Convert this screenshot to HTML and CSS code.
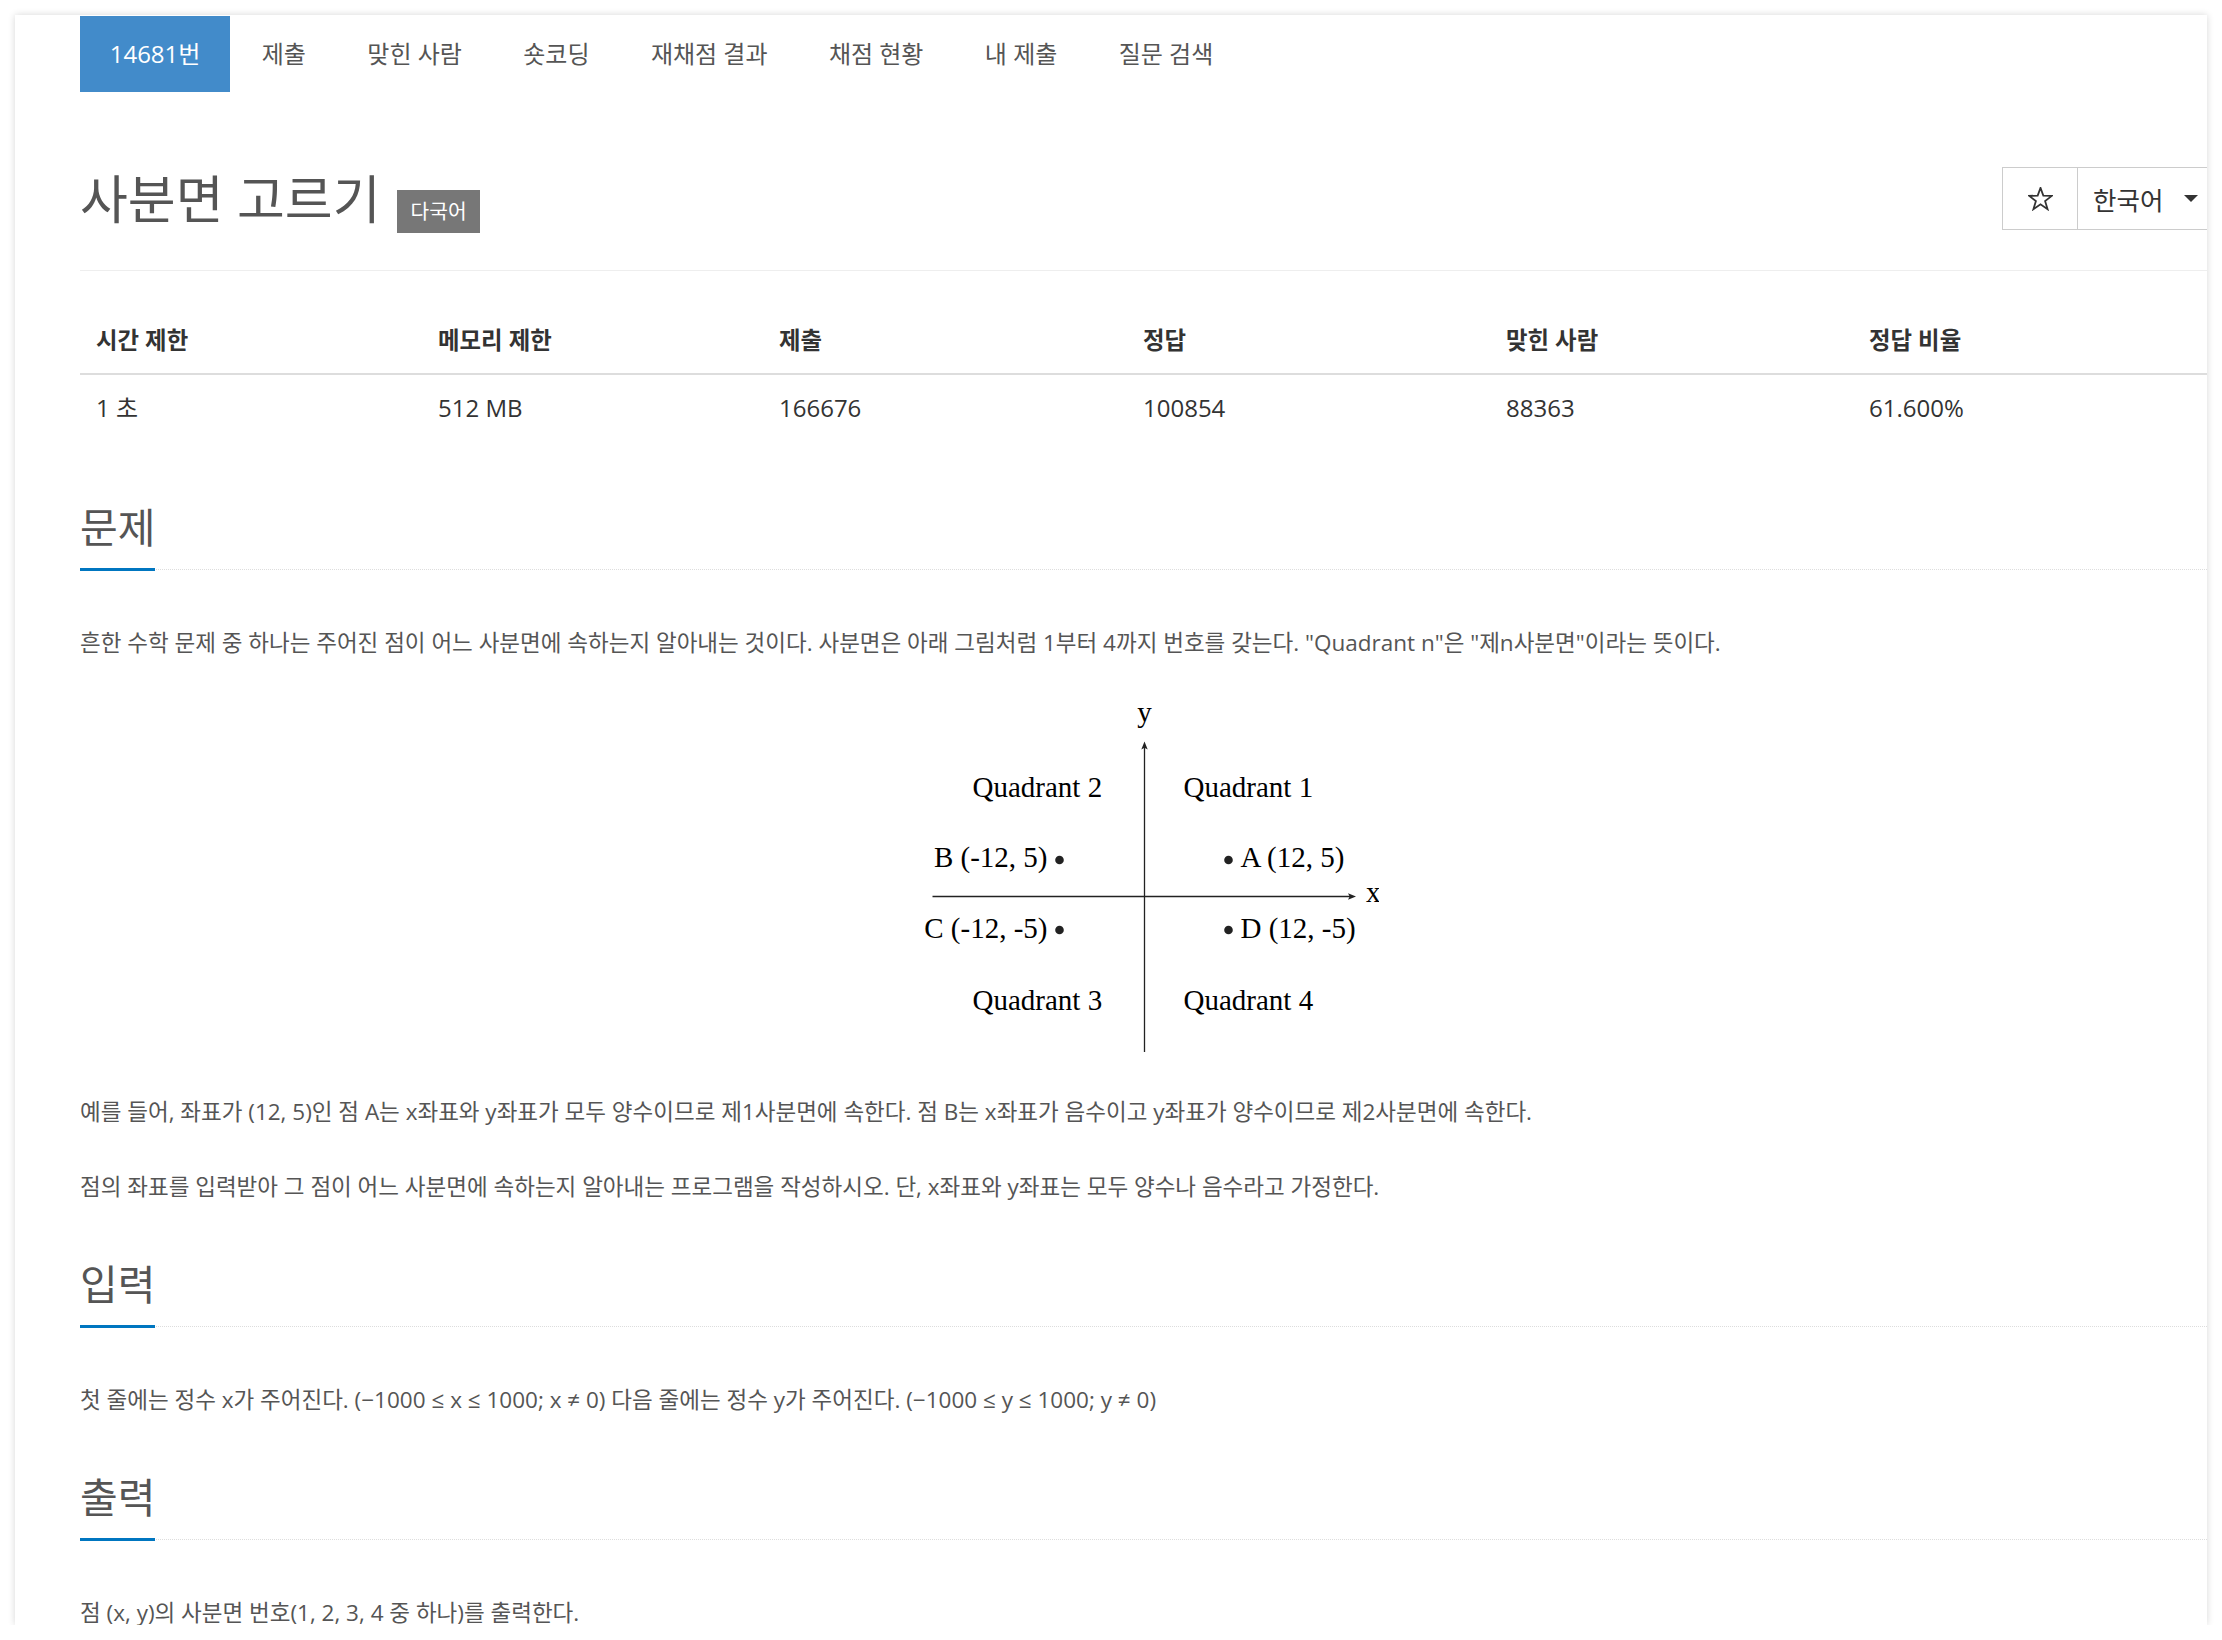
FILE: index.html
```html
<!DOCTYPE html>
<html lang="ko">
<head>
<meta charset="utf-8">
<title>사분면 고르기</title>
<link rel="stylesheet" href="styles.css">
</head>
<body>
<div class="card">
  <ul class="tabs">
    <li><a class="active">14681번</a></li>
    <li><a>제출</a></li>
    <li><a>맞힌 사람</a></li>
    <li><a>숏코딩</a></li>
    <li><a>재채점 결과</a></li>
    <li><a>채점 현황</a></li>
    <li><a>내 제출</a></li>
    <li><a>질문 검색</a></li>
  </ul>

  <div class="page-header">
    <h1 class="title"><span class="title-text">사분면 고르기</span><span class="label">다국어</span></h1>
    <div class="btn-group">
      <span class="btn star-btn">
        <svg width="25" height="24" viewBox="0 0 24 23"><polygon points="12,0.8 14.7,8.3 22.9,8.5 16.4,13.4 18.8,21.3 12,16.6 5.2,21.3 7.6,13.4 1.1,8.5 9.3,8.3" fill="none" stroke="#333" stroke-width="1.7" stroke-linejoin="miter"/></svg>
      </span>
      <span class="btn lang-btn">한국어<span class="caret"></span></span>
    </div>
  </div>

  <table class="info">
    <colgroup>
      <col class="c1"><col class="c2"><col class="c3"><col class="c4"><col class="c5"><col>
    </colgroup>
    <thead>
      <tr><th>시간 제한</th><th>메모리 제한</th><th>제출</th><th>정답</th><th>맞힌 사람</th><th>정답 비율</th></tr>
    </thead>
    <tbody>
      <tr><td>1 초</td><td>512 MB</td><td>166676</td><td>100854</td><td>88363</td><td>61.600%</td></tr>
    </tbody>
  </table>

  <section class="section">
    <div class="headline"><h2>문제</h2></div>
    <p class="text">흔한 수학 문제 중 하나는 주어진 점이 어느 사분면에 속하는지 알아내는 것이다. 사분면은 아래 그림처럼 1부터 4까지 번호를 갖는다. "Quadrant n"은 "제n사분면"이라는 뜻이다.</p>
    <div class="figure">
      <svg class="quad" width="470" height="360" viewBox="0 0 470 360">
        <g stroke="#222" stroke-width="1.3" fill="none">
          <line x1="235.5" y1="52" x2="235.5" y2="359"/>
          <line x1="23.5" y1="203.5" x2="443" y2="203.5"/>
        </g>
        <g fill="#222">
          <path d="M235.5 48.5 L232.3 56.5 L235.5 54.8 L238.7 56.5 Z"/>
          <path d="M447 203.5 L439 200.3 L440.7 203.5 L439 206.7 Z"/>
          <circle cx="150.5" cy="167" r="4.3"/>
          <circle cx="319.5" cy="167" r="4.3"/>
          <circle cx="150.5" cy="237" r="4.3"/>
          <circle cx="319.5" cy="237" r="4.3"/>
        </g>
        <g class="fig-text" fill="#000">
          <text x="235.5" y="29" text-anchor="middle">y</text>
          <text x="457" y="209">x</text>
          <text x="63.5" y="104">Quadrant 2</text>
          <text x="274.5" y="104">Quadrant 1</text>
          <text x="138.5" y="174" text-anchor="end">B (-12, 5)</text>
          <text x="331.5" y="174">A (12, 5)</text>
          <text x="138.5" y="245" text-anchor="end">C (-12, -5)</text>
          <text x="331.5" y="245">D (12, -5)</text>
          <text x="63.5" y="317">Quadrant 3</text>
          <text x="274.5" y="317">Quadrant 4</text>
        </g>
      </svg>
    </div>
    <p class="text">예를 들어, 좌표가 (12, 5)인 점 A는 x좌표와 y좌표가 모두 양수이므로 제1사분면에 속한다. 점 B는 x좌표가 음수이고 y좌표가 양수이므로 제2사분면에 속한다.</p>
    <p class="text">점의 좌표를 입력받아 그 점이 어느 사분면에 속하는지 알아내는 프로그램을 작성하시오. 단, x좌표와 y좌표는 모두 양수나 음수라고 가정한다.</p>
  </section>

  <section class="section">
    <div class="headline"><h2>입력</h2></div>
    <p class="text">첫 줄에는 정수 x가 주어진다. (−1000 ≤ x ≤ 1000; x ≠ 0) 다음 줄에는 정수 y가 주어진다. (−1000 ≤ y ≤ 1000; y ≠ 0)</p>
  </section>

  <section class="section">
    <div class="headline"><h2>출력</h2></div>
    <p class="text">점 (x, y)의 사분면 번호(1, 2, 3, 4 중 하나)를 출력한다.</p>
  </section>
</div>
</body>
</html>
```

FILE: styles.css
```css
html, body {
  margin: 0;
  padding: 0;
  background: #fff;
}

body {
  font-family: "Open Sans", "Noto Sans CJK KR", sans-serif;
  color: #555;
}

.card {
  box-sizing: border-box;
  width: 2192px;
  height: 1610px;
  margin: 15px 0 0 15px;
  padding: 1px 0 0 65px;
  background: #fff;
  overflow: hidden;
  box-shadow: 0 0 7px rgba(0, 0, 0, 0.16);
}

/* tabs */
.tabs {
  display: flex;
  list-style: none;
  margin: 0;
  padding: 0;
}

.tabs li + li {
  margin-left: 2px;
}

.tabs a {
  display: block;
  height: 76px;
  line-height: 76px;
  padding: 0 29.7px;
  font-size: 24px;
  color: #555;
}

.tabs a.active {
  background: #428bca;
  color: #fff;
}

/* header */
.page-header {
  display: flex;
  justify-content: space-between;
  align-items: flex-start;
  height: 101px;
  margin-top: 77px;
  border-bottom: 1px solid #eee;
}

.title {
  display: flex;
  align-items: flex-start;
  margin: 0;
  font-size: 52px;
  line-height: 60px;
  font-weight: 400;
  color: #555;
}

.label {
  margin: 21px 0 0 16.5px;
  padding: 9px 13.5px;
  font-size: 20.3px;
  line-height: 25px;
  background: #777;
  color: #fff;
}

.btn-group {
  display: flex;
  margin-top: -2px;
  margin-right: -1px;
  border: 1px solid #ccc;
  height: 61px;
}

.btn {
  display: flex;
  align-items: center;
  color: #333;
}

.star-btn {
  justify-content: center;
  width: 74px;
  border-right: 1px solid #ccc;
}

.lang-btn {
  width: 107px;
  padding: 0 7px 0 15px;
  font-size: 25.5px;
}

.caret {
  margin-left: 21px;
  width: 0;
  height: 0;
  border-top: 7px solid #333;
  border-left: 7.5px solid transparent;
  border-right: 7.5px solid transparent;
}

/* info table */
.info {
  width: 100%;
  margin: 36px 0 60px;
  border-collapse: collapse;
  table-layout: fixed;
  color: #333;
}

.info .c1 { width: 342px; }
.info .c2 { width: 341px; }
.info .c3 { width: 364px; }
.info .c4 { width: 363px; }
.info .c5 { width: 363px; }

.info th {
  text-align: left;
  padding: 17px 16px;
  line-height: 32px;
  font-size: 23.4px;
  font-weight: 700;
  border-bottom: 2px solid #ddd;
}

.info td {
  padding: 17px 16px;
  line-height: 32px;
  font-size: 24px;
}

/* sections */
.section {
  padding-bottom: 13px;
}

.headline {
  display: flex;
  margin-bottom: 56px;
  border-bottom: 1px dotted #ddd;
}

.headline h2 {
  margin: 0 0 -2px;
  padding-bottom: 15px;
  font-size: 41px;
  line-height: 52px;
  font-weight: 400;
  color: #555;
  border-bottom: 3px solid #0076c0;
}

.text {
  margin: 0 0 42px;
  font-size: 22.5px;
  line-height: 33px;
  color: #555;
}

.figure {
  margin: -8px 0 42px;
}

.quad {
  display: block;
  margin: 0 auto;
}

.fig-text {
  font-family: "Liberation Serif", serif;
  font-size: 29px;
}
```
